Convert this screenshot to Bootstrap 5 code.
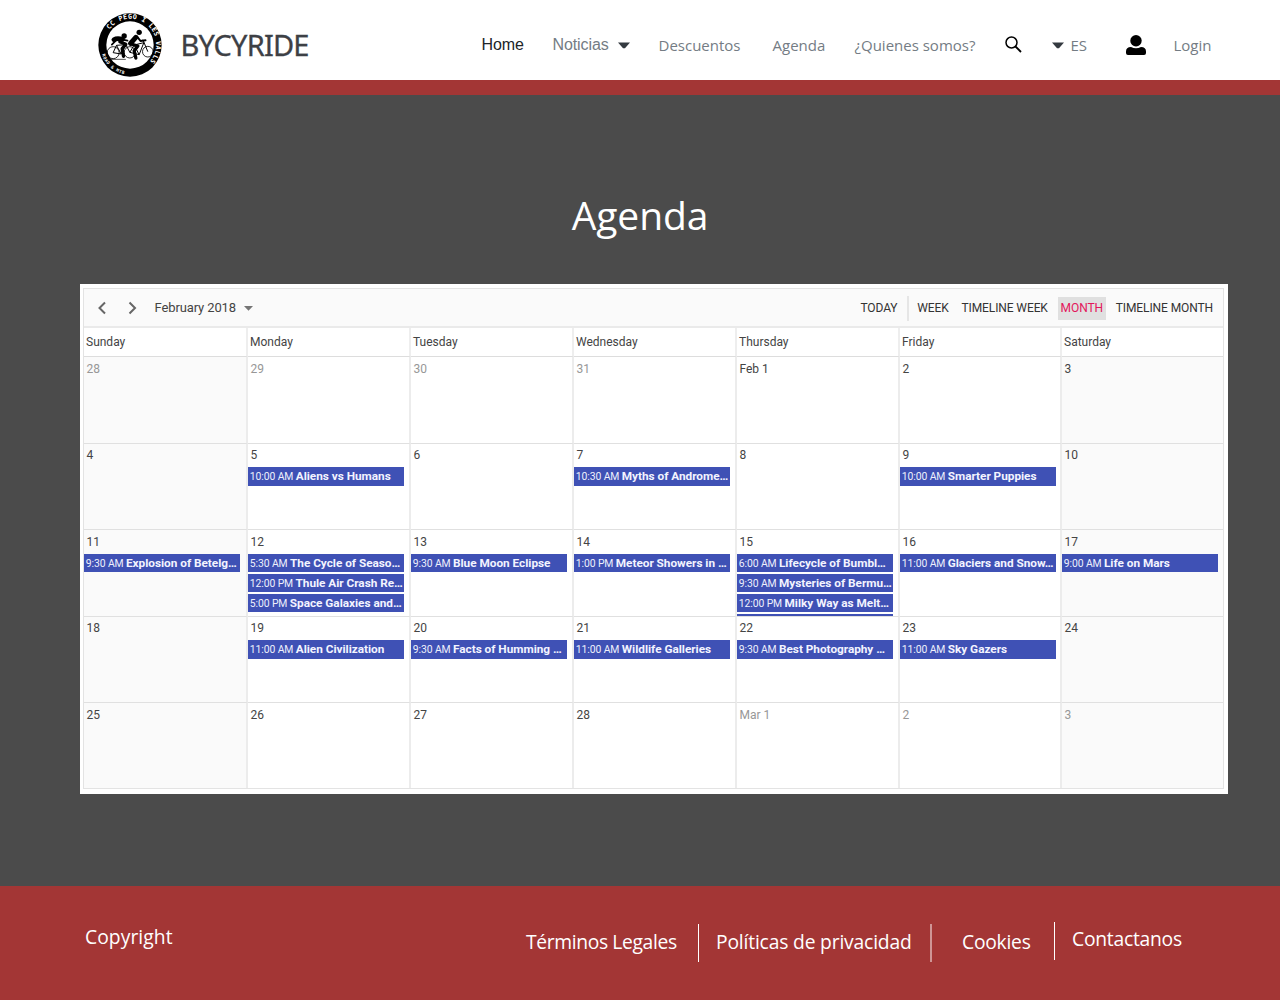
<!DOCTYPE html>
<html lang="es">
<head>
<meta charset="utf-8">
<meta name="viewport" content="width=device-width, initial-scale=1">
<title>Bycyride - Agenda</title>
<link href="https://cdn.jsdelivr.net/npm/bootstrap@5.3.0/dist/css/bootstrap.min.css" rel="stylesheet">
<style>
  body{font-family:"Open Sans","Noto Sans",sans-serif;background:#4b4b4b;height:1000px;overflow:hidden}
  .topbar{height:80px;padding:0 0 0 98px}
  .brand-logo{width:64px;height:64px;margin-top:9px}
  .brand-name{width:301px;margin-left:18.500px;margin-top:9px;font:29px/40px "Noto Sans",sans-serif;color:#3d4045;letter-spacing:-.8px;-webkit-text-stroke:.3px #3d4045}
  .topbar .nav-link{padding:0;font-size:15px;line-height:22px;color:#747c84;white-space:nowrap;letter-spacing:0;margin-top:9px}
  .topbar .nav-link.arial{font-family:"Liberation Sans",sans-serif;font-size:16px;letter-spacing:-.1px;margin-top:9px}
  .topbar .nav-link.active{color:#212529}
  .nav-icon{display:block;margin-top:10px}
  .w-home{width:71px}.w-not{width:65px}.w-car{width:41px}.w-desc{width:114px}.w-age{width:82px}.w-qui{width:150px}
  .w-sea{width:47px}.w-es{width:55px}.w-usr{width:48px}.w-car2{width:19px}
  .redline{height:15px;background:#a33635}
  .page-main{height:791px;padding:92px 52px 0 80px}
  .page-title{font-size:39px;line-height:56px;height:97px;padding-right:28px;margin:0;font-weight:400;letter-spacing:-.1px}
  .calendar{height:510px;padding:4px 4px 5px 3px;font-family:Roboto,sans-serif;font-size:12px;color:#444}
  .cal-frame{border:1px solid #e3e3e3;height:501px;overflow:hidden}
  .cal-tools{height:39px;background:#fafafa;border-bottom:2px solid #eaeaea;padding:1px 7px 0 13px}
  .cal-tools .period{font-size:13px;margin-left:17.500px;margin-right:8px;letter-spacing:-.12px}
  .view-btn{padding:0 3px;line-height:23px;height:23px;color:#333;letter-spacing:-.1px;white-space:nowrap;margin-right:6.800px}
  .view-btn:last-child{margin-right:0}
  .view-btn.on{background:#e0e0e0;color:#e3165b}
  .vsep{width:2px;height:25px;background:#e6e6e6;margin-right:5px}
  .cal-grid{display:grid;grid-template-columns:164px 163px 163px 163px 163px 162px 161px}
  .day-head{height:29px;border-right:2px solid #eee;border-bottom:1px solid #ddd;padding-left:2px;line-height:29px;font-size:12px;color:#444}
  .day-cell{height:86.5px;border-right:2px solid #ececec;border-bottom:1px solid #e0e0e0;overflow:hidden;line-height:14px}
  .day-cell:nth-child(7n+1){background:#fafafa}
  .day-cell:nth-child(7n){background:#fafafa;border-right:0}
  .day-head:nth-child(7n){border-right:0}
  .cal-grid .day-cell:nth-last-child(-n+7){height:85px;border-bottom:0}
  .day-num{padding:4.500px 0 0 2.500px;height:23.500px}
  .day-num.dim{color:#979797}
  .event-bar{width:156px;height:18.500px;margin-bottom:1.500px;background:#3f51b5;color:#fff;line-height:19.500px;padding:0 2px 0 1.800px;white-space:nowrap;overflow:hidden;font-size:11.800px}
  .event-bar .hr{font-size:10.400px;letter-spacing:-.1px;color:#eef0fc}
  .event-bar b{font-weight:700;color:#f3f4ff;letter-spacing:-.02px;margin-left:-.5px}
  .page-foot{height:114px;background:#a33635;padding-left:85px;font-size:19.300px;color:#fff;line-height:28px;letter-spacing:-.25px;white-space:nowrap}
  .f-copy{width:441px;margin-top:37px;letter-spacing:.05px}.f-a{width:172px;margin-top:42px;letter-spacing:-.37px}.f-b{width:231px;margin-top:42px;padding-left:17px;letter-spacing:-.18px}
  .f-c{width:122px;margin-top:42px;padding-left:30px}.f-d{margin-top:39px;padding-left:17px}
  .f-line{width:1px;height:38px;background:#fff;margin-top:38px}
  .f-line.soft{width:2px;background:#cf9595}
  .f-line.up{margin-top:36px}
</style>
<script src="https://cdn.jsdelivr.net/npm/bootstrap@5.3.0/dist/js/bootstrap.bundle.min.js"></script>
</head>
<body>
<header class="topbar d-flex align-items-center bg-white">
  <svg class="brand-logo flex-shrink-0" viewBox="24.5 19 192 192">
    <circle cx="120.5" cy="115" r="95"/>
    <circle cx="120.5" cy="115" r="71" fill="#fff"/>
    <path id="ringTop" d="M59 69 A77 77 0 1 1 174 170" fill="none"/>
    <path id="ringLow" d="M35.500 141 A89 89 0 0 0 110 203.500" fill="none"/>
    <g fill="#fff" font-family="DejaVu Sans Mono" font-weight="bold">
      <text font-size="20"><textPath href="#ringTop" textLength="250">CC PEGO I LES VALLS</textPath></text>
      <text font-size="13"><textPath href="#ringLow" startOffset="3" textLength="92">ROAD &amp; MTB</textPath></text>
    </g>
    <g fill="none" stroke="#000" stroke-width="2.5">
      <circle cx="70" cy="138" r="18"/><circle cx="120" cy="137" r="17"/><circle cx="174" cy="135" r="16"/>
      <path d="M52 158h56" stroke-width="2"/>
      <path d="M70 138L80 116L108 114L120 137M80 116L94 142L108 114M70 138L94 142M120 137L133 115L162 108L148 144L133 115M120 137L148 144M174 135L159 99" stroke-width="3"/>
    </g>
    <g stroke="#000" stroke-linecap="round" stroke-linejoin="round" fill="none">
      <path d="M72 99Q82 93 98 98" stroke-width="14"/><path d="M78 102L66 114M98 99L113 102" stroke-width="5"/>
      <path d="M90 105L108 113L97 126L101 149" stroke-width="10"/>
      <path d="M138 92L122 110" stroke-width="15"/><path d="M124 112L144 118L133 132L138 154" stroke-width="10"/><path d="M142 90L152 103L167 101" stroke-width="6"/>
    </g>
    <circle cx="103" cy="88" r="8"/><circle cx="148" cy="77" r="8"/>
  </svg>
  <div class="brand-name">BYCYRIDE</div>
  <nav class="d-flex align-items-center">
    <a class="nav-link arial active w-home">Home</a>
    <a class="nav-link arial w-not">Noticias</a>
    <div class="w-car"><svg class="nav-icon" width="12" height="7"><path d="M0 .5h12L7 6.3H5z" fill="#343a40"/></svg></div>
    <a class="nav-link w-desc">Descuentos</a>
    <a class="nav-link w-age">Agenda</a>
    <a class="nav-link w-qui">¿Quienes somos?</a>
    <div class="w-sea"><svg class="nav-icon" width="18" height="18" fill="none" stroke="#000"><circle cx="6.5" cy="6.5" r="5.5" stroke-width="1.5"/><path d="M10.5 10.5L16 16" stroke-width="1.8"/></svg></div>
    <div class="w-car2"><svg class="nav-icon" width="12" height="7"><path d="M0 .5h12L7 6.3H5z" fill="#343a40"/></svg></div>
    <a class="nav-link w-es">ES</a>
    <div class="w-usr"><svg class="nav-icon" width="20" height="20"><circle cx="10" cy="5.7" r="5.7"/><path d="M0 18v-1.500Q0 12 5 12Q10 14.500 15 12Q20 12 20 16.500V18Q20 20 18 20H2Q0 20 0 18z"/></svg></div>
    <a class="nav-link">Login</a>
  </nav>
</header>
<div class="redline"></div>
<main class="page-main">
  <h1 class="page-title text-white text-center">Agenda</h1>
  <section class="calendar bg-white">
    <div class="cal-frame">
      <div class="cal-tools d-flex align-items-center">
        <svg width="40" height="14" fill="none" stroke="#666" stroke-width="2"><path d="M8 1.500L2.500 7L8 12.500M32.500 1.500L38 7L32.500 12.500"/></svg>
        <span class="period">February 2018</span>
        <svg width="9" height="5"><path d="M0 0h9L4.500 4.800z" fill="#757575"/></svg>
        <div class="d-flex align-items-center ms-auto">
          <span class="view-btn">TODAY</span><span class="vsep"></span>
          <span class="view-btn">WEEK</span><span class="view-btn">TIMELINE WEEK</span>
          <span class="view-btn on">MONTH</span><span class="view-btn">TIMELINE MONTH</span>
        </div>
      </div>
      <div class="cal-grid" id="heads"></div>
      <div class="cal-grid" id="days"></div>
    </div>
  </section>
</main>
<footer class="page-foot d-flex">
  <div class="f-copy">Copyright</div>
  <div class="f-a">Términos Legales</div><div class="f-line"></div>
  <div class="f-b">Políticas de privacidad</div><div class="f-line soft"></div>
  <div class="f-c">Cookies</div><div class="f-line up"></div>
  <div class="f-d">Contactanos</div>
</footer>
<script>
  const heads = ['Sunday','Monday','Tuesday','Wednesday','Thursday','Friday','Saturday'];
  const days = ['28','29','30','31','Feb 1'];
  for (let d = 2; d <= 28; d++) days.push(String(d));
  days.push('Mar 1','2','3');
  const events = {
    5:[['10:00 AM','Aliens vs Humans']], 7:[['10:30 AM','Myths of Androme…']], 9:[['10:00 AM','Smarter Puppies']],
    11:[['9:30 AM','Explosion of Betelg…']],
    12:[['5:30 AM','The Cycle of Seaso…'],['12:00 PM','Thule Air Crash Re…'],['5:00 PM','Space Galaxies and…']],
    13:[['9:30 AM','Blue Moon Eclipse']], 14:[['1:00 PM','Meteor Showers in …']],
    15:[['6:00 AM','Lifecycle of Bumbl…'],['9:30 AM','Mysteries of Bermu…'],['12:00 PM','Milky Way as Melt…'],['','']],
    16:[['11:00 AM','Glaciers and Snow…']], 17:[['9:00 AM','Life on Mars']],
    19:[['11:00 AM','Alien Civilization']], 20:[['9:30 AM','Facts of Humming …']], 21:[['11:00 AM','Wildlife Galleries']],
    22:[['9:30 AM','Best Photography …']], 23:[['11:00 AM','Sky Gazers']]
  };
  document.getElementById('heads').innerHTML = heads.map(h => `<div class="day-head">${h}</div>`).join('');
  document.getElementById('days').innerHTML = days.map((d, i) => {
    const dim = i < 4 || i > 31;
    const list = dim ? [] : (events[i - 3] || []);
    return `<div class="day-cell"><div class="day-num${dim ? ' dim' : ''}">${d}</div>` +
      list.map(e => `<div class="event-bar"><span class="hr">${e[0]}</span> <b>${e[1]}</b></div>`).join('') + '</div>';
  }).join('');
</script>
</body>
</html>
